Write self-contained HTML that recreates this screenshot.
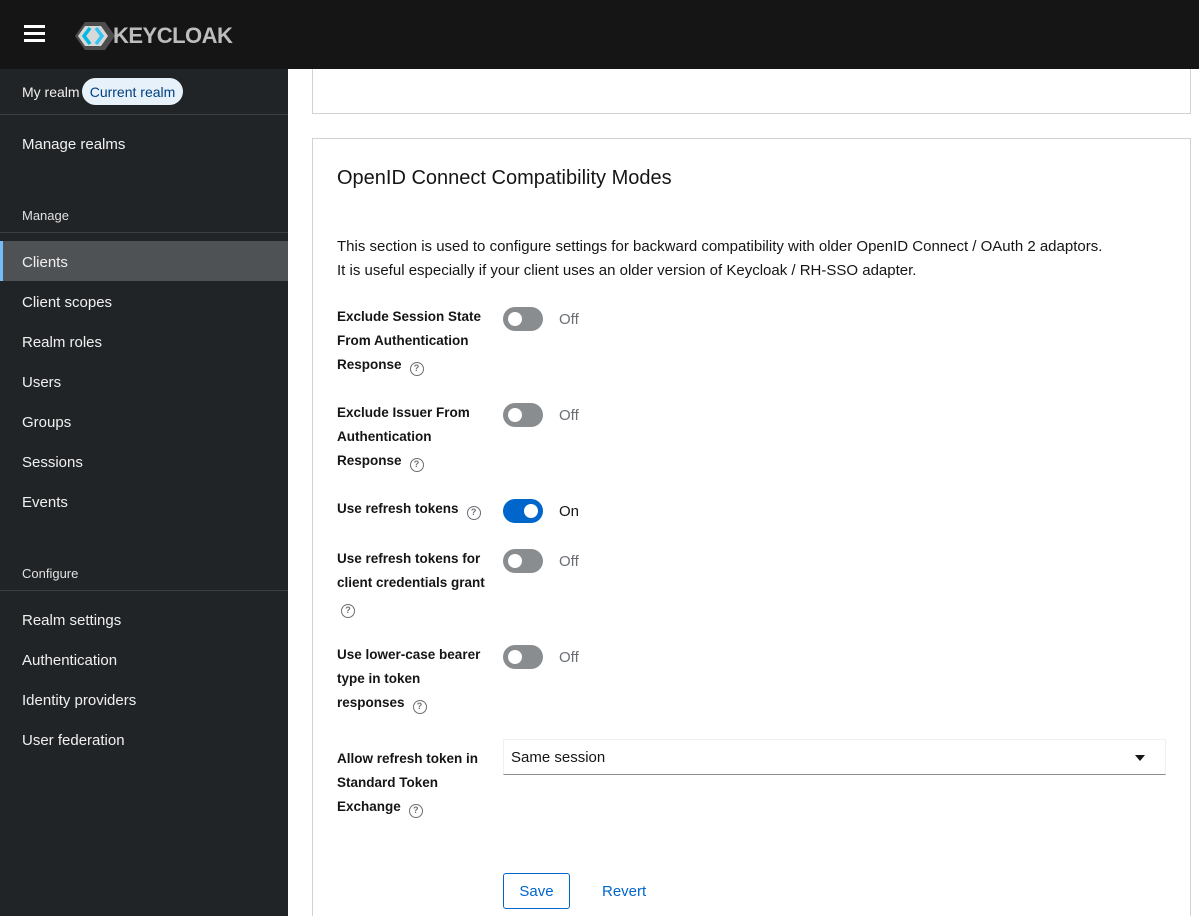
<!DOCTYPE html>
<html><head><meta charset="utf-8"><style>
*{box-sizing:border-box;margin:0;padding:0}
html,body{width:1199px;height:916px;overflow:hidden}
body{background:#fff;font-family:"Liberation Sans",sans-serif;color:#151515;position:relative}
#w{position:relative;width:1199px;height:916px;overflow:hidden}
.hdr{position:absolute;left:0;top:0;width:1199px;height:69px;background:#151515;z-index:5}
.side{position:absolute;left:0;top:69px;width:288px;height:847px;background:#212427;color:#fff;z-index:4}
.a{position:absolute}
.si{position:absolute;left:22px;font-size:15px;color:#f0f0f0}
.sec{position:absolute;left:22px;font-size:13px;color:#e0e0e0}
.line{position:absolute;left:0;width:288px;height:1px;background:#3c3f42}
.card{position:absolute;border:1px solid #d2d2d2;background:#fff}
.lbl{position:absolute;left:337px;width:160px;font-size:13.5px;font-weight:bold;line-height:24px}
.q{display:inline-block;width:14px;height:14px;border:1.4px solid #6a6e73;border-radius:50%;font-size:9px;line-height:11px;text-align:center;color:#6a6e73;font-weight:bold;vertical-align:-2px;margin-left:8px}
.tg{position:absolute;left:503px;width:40px;height:24px;border-radius:12px;background:#8a8d90}
.tg::after{content:"";position:absolute;left:5px;top:5px;width:14px;height:14px;border-radius:50%;background:#fff}
.tg.on{background:#0066cc}.tg.on::after{left:21px}
.st{position:absolute;left:559px;font-size:15px;color:#6a6e73}
</style></head><body><div id="w">
<div class="hdr">
 <div class="a" style="left:24px;top:25px;width:21px;height:3px;background:#fff;box-shadow:0 7px 0 #fff,0 14px 0 #fff"></div>
 <svg class="a" style="left:75px;top:20px" width="40" height="32" viewBox="0 0 40 32">
  <polygon points="10,2 30,2 40,16 30,30 10,30 0,16" fill="#4d4d4d"/>
  <polygon points="3,16 10,6 26,6 33,16 26,26 10,26" fill="#d8d8d8"/>
  <path d="M15 8 L9 16 L15 24" stroke="#00b8e3" stroke-width="3.5" fill="none"/>
  <path d="M21 8 L27 16 L21 24" stroke="#33c6f4" stroke-width="3.5" fill="none"/>
 </svg>
 <div class="a" style="left:113px;top:23px;font-size:22px;font-weight:bold;color:#bdbdbd;letter-spacing:-0.5px">KEYCLOAK</div>
</div>
<div class="side">
 <div class="si" style="top:15px;font-size:14px">My realm</div>
 <div class="a" style="left:82px;top:9px;width:101px;height:27px;border-radius:14px;background:#e7f1fa;color:#004080;font-size:14px;line-height:28px;text-align:center">Current realm</div>
 <div class="line" style="top:45px"></div>
 <div class="si" style="top:67px">Manage realms</div>
 <div class="sec" style="top:139px">Manage</div>
 <div class="line" style="top:163px"></div>
 <div class="a" style="left:0;top:172px;width:288px;height:40px;background:#4f5255;border-left:3px solid #73bcf7"></div>
 <div class="si" style="top:185px">Clients</div>
 <div class="si" style="top:225px">Client scopes</div>
 <div class="si" style="top:265px">Realm roles</div>
 <div class="si" style="top:305px">Users</div>
 <div class="si" style="top:345px">Groups</div>
 <div class="si" style="top:385px">Sessions</div>
 <div class="si" style="top:425px">Events</div>
 <div class="sec" style="top:497px">Configure</div>
 <div class="line" style="top:521px"></div>
 <div class="si" style="top:543px">Realm settings</div>
 <div class="si" style="top:583px">Authentication</div>
 <div class="si" style="top:623px">Identity providers</div>
 <div class="si" style="top:663px">User federation</div>
</div>
<div class="card" style="left:312px;top:20px;width:879px;height:94px"></div>
<div class="card" style="left:312px;top:138px;width:879px;height:800px"></div>
<div class="a" style="left:337px;top:167px;font-size:20px">OpenID Connect Compatibility Modes</div>
<div class="a" style="left:337px;top:235px;width:840px;font-size:15px;line-height:24px">This section is used to configure settings for backward compatibility with older OpenID Connect / OAuth 2 adaptors.<br>It is useful especially if your client uses an older version of Keycloak / RH-SSO adapter.</div>

<div class="lbl" style="top:305px;width:155px">Exclude Session State From Authentication Response<span class="q">?</span></div>
<div class="tg" style="top:307px"></div><div class="st" style="top:311px">Off</div>
<div class="lbl" style="top:401px;width:140px">Exclude Issuer From Authentication Response<span class="q">?</span></div>
<div class="tg" style="top:403px"></div><div class="st" style="top:407px">Off</div>
<div class="lbl" style="top:497px">Use refresh tokens<span class="q">?</span></div>
<div class="tg on" style="top:499px"></div><div class="st" style="top:503px;color:#151515">On</div>
<div class="lbl" style="top:547px;width:155px">Use refresh tokens for client credentials grant<span class="q" style="margin-left:4px">?</span></div>
<div class="tg" style="top:549px"></div><div class="st" style="top:553px">Off</div>
<div class="lbl" style="top:643px;width:150px">Use lower-case bearer type in token responses<span class="q">?</span></div>
<div class="tg" style="top:645px"></div><div class="st" style="top:649px">Off</div>
<div class="lbl" style="top:747px;width:150px">Allow refresh token in Standard Token Exchange<span class="q">?</span></div>
<div class="a" style="left:503px;top:739px;width:663px;height:36px;border:1px solid #f0f0f0;border-bottom:1px solid #8a8d90;font-size:15px;line-height:36px;padding-left:7px">Same session
 <div class="a" style="right:20px;top:15px;width:0;height:0;border-left:5px solid transparent;border-right:5px solid transparent;border-top:6px solid #151515"></div>
</div>
<div class="a" style="left:503px;top:873px;width:67px;height:36px;border:1px solid #0066cc;border-radius:3px;color:#0066cc;font-size:15px;line-height:36px;text-align:center">Save</div>
<div class="a" style="left:602px;top:883px;color:#0066cc;font-size:15px">Revert</div>
</div></body></html>
